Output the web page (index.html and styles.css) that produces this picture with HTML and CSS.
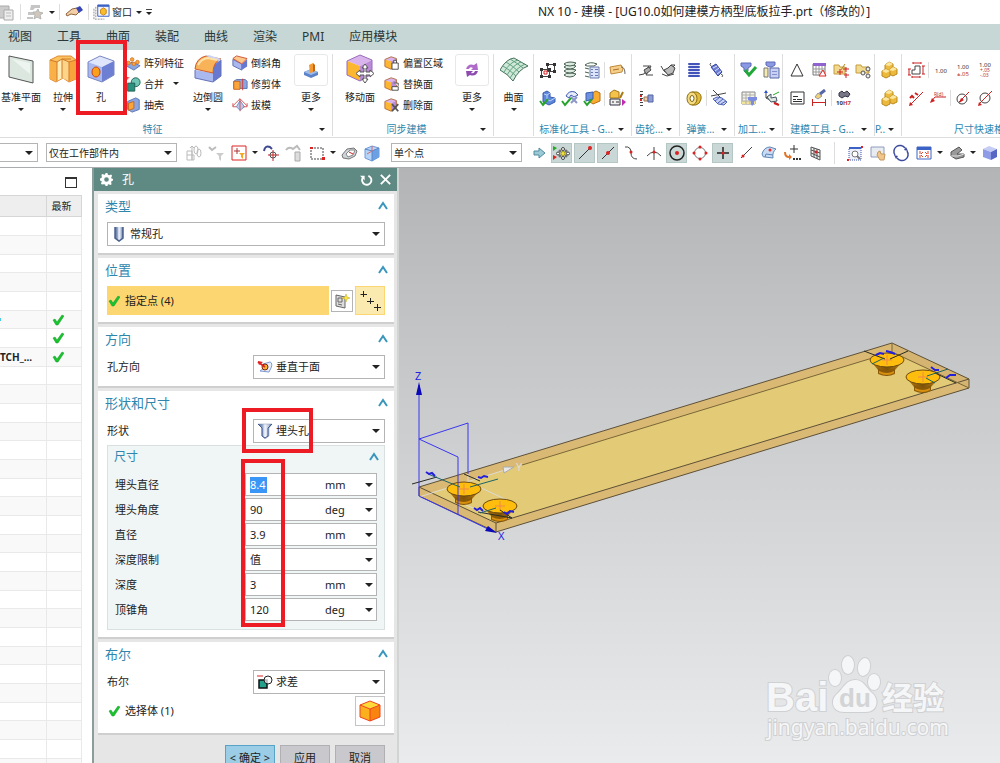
FILE: index.html
```html
<!DOCTYPE html>
<html lang="zh-CN">
<head>
    <meta charset="UTF-8">
    <meta name="viewport" content="width=device-width, initial-scale=1.0">
    <title>NX 10 - 建模</title>
    <link rel="stylesheet" href="styles.css">
</head>
<body>
    <!-- icon sprites -->
    <svg class="sprites" aria-hidden="true">
        <defs>
            <linearGradient id="gBlue" x1="0" y1="0" x2="1" y2="1"><stop offset="0" stop-color="#c3d3f7"/><stop offset="1" stop-color="#5f78cf"/></linearGradient>
            <linearGradient id="gOrange" x1="0" y1="0" x2="1" y2="1"><stop offset="0" stop-color="#ffe08a"/><stop offset="1" stop-color="#ef8f1e"/></linearGradient>
            <linearGradient id="gSteel" x1="0" y1="0" x2="1" y2="0"><stop offset="0" stop-color="#4d6390"/><stop offset=".3" stop-color="#8fa2c6"/><stop offset=".5" stop-color="#f4f7fd"/><stop offset=".75" stop-color="#b9c6de"/><stop offset="1" stop-color="#44597f"/></linearGradient>
            <linearGradient id="gCone" x1="0" y1="0" x2="1" y2="0"><stop offset="0" stop-color="#b97a12"/><stop offset=".5" stop-color="#7d5208"/><stop offset="1" stop-color="#c58517"/></linearGradient>
        </defs>
        <symbol id="i-plane" viewBox="0 0 28 30"><path d="M2 2 26 7V29L2 23Z" fill="#dbe7df" stroke="#555"/><path d="M5 5 23 9V20Z" fill="#eef5f0"/></symbol>
        <symbol id="i-extrude" viewBox="0 0 28 30"><path d="M1 6 9 2H22L27 6V25L20 28 14 24 7 28 1 25Z" fill="#fbc35e" stroke="#e08a35"/><path d="M1 6 8 8V27L1 25Z" fill="#f9b046"/><path d="M20 8 27 6V25L20 27Z" fill="#f7a53a"/><path d="M8 8 13 5V24L8 27Z" fill="#ffedb5"/><path d="M13 5 20 8V27L13 24Z" fill="#fdd488"/><path d="M1 6 8 8V27M8 8 13 5V24M13 5 20 8V27M20 8 27 6M13 5H22" fill="none" stroke="#d07a2c"/></symbol>
        <symbol id="i-hole" viewBox="0 0 28 30"><path d="M1 8 13 2 27 7 15 13Z" fill="#dfe6fb"/><path d="M1 8 15 13V28L1 23Z" fill="#a9b8ee"/><path d="M15 13 27 7V21L15 28Z" fill="#6d7fd2"/><path d="M1 8 13 2 27 7V21L15 28 1 23Z" fill="none" stroke="#7886c4"/><ellipse cx="9" cy="18" rx="4" ry="5" fill="#f9a11b" stroke="#cf3f14"/></symbol>
        <symbol id="i-fillet" viewBox="0 0 28 30"><path d="M1 16 19 19V28L1 24Z" fill="#a9b8ee"/><path d="M19 18Q19 9 27 6V22L19 28Z" fill="#6678d0"/><path d="M1 15Q2 4 12 2L27 5Q19 8 19 19L1 15Z" fill="#f8b257" stroke="#cf5a2c"/><path d="M12 2 15 1 27 5 25 7Z" fill="#c9d5f8"/><path d="M4 11Q7 5 14 4L23 6" fill="none" stroke="#fde2ac" stroke-width="2"/><path d="M1 16V24L19 28 27 22V6" fill="none" stroke="#6472b8"/></symbol>
        <symbol id="i-move" viewBox="0 0 28 30"><path d="M1 7 14 1 26 6 14 12Z" fill="#d9b3ec"/><path d="M1 7 14 12V27L1 21Z" fill="#fdb62f"/><path d="M14 12 26 6V20L14 27Z" fill="#bb8bd8"/><path d="M1 7 14 1 26 6V20L14 27 1 21Z" fill="none" stroke="#9a6bb5"/><path d="M19 10 22 14H20V18H24V16L28 19.500 24 23V21H20V25H22L19 29 16 25H18V21H14V23L10 19.500 14 16V18H18V14H16Z" fill="#fff" stroke="#555"/></symbol>
        <symbol id="i-surface" viewBox="0 0 28 30"><path d="M0 16Q6 5 14 4L28 12Q19 15 13 27Q8 20 0 16Z" fill="#cfe8d9" stroke="#46705a"/><path d="M3 12Q10 16 16 22M6 8Q13 12 19 18M10 5Q17 9 23 14M4 18Q10 8 18 6M7 21Q13 11 21 8M10 24Q16 14 25 10" fill="none" stroke="#5f9f7c"/></symbol>
        <symbol id="i-boss" viewBox="0 0 18 18"><path d="M2 11 9 8 16 11V14L9 17 2 14Z" fill="#5c83c9"/><path d="M2 11 9 8 16 11 9 14Z" fill="#9dbbea"/><path d="M7 4 11 2V11L8 12Z" fill="#f49a33"/><path d="M11 2 13 4V10L11 11Z" fill="#c96510"/></symbol>
        <symbol id="i-cycle" viewBox="0 0 18 18"><path d="M3 8Q5 2 11 4L14 2 15 9 8 9 10 7Q7 5 6 8Z" fill="#b06ac9"/><path d="M15 10Q13 16 7 14L4 16 3 10 10 10 8 12Q11 13 12 10Z" fill="#8e4bb0"/></symbol>
        <symbol id="i-pattern" viewBox="0 0 18 18"><path d="M1 12 8 8 17 12 10 17Z" fill="#8ba6df" stroke="#546fae"/><g fill="#f9a53a" stroke="#d5792b"><circle cx="4" cy="9" r="2"/><circle cx="8" cy="5" r="2"/><circle cx="10" cy="10" r="2"/><circle cx="14" cy="8" r="2"/></g></symbol>
        <symbol id="i-unite" viewBox="0 0 18 18"><circle cx="12" cy="7" r="5" fill="#6fc4b4" stroke="#1b5b50"/><path d="M3 8H11V17H3Z" fill="#2d8f7d" stroke="#1b5b50"/><path d="M1 2H5M3 1V4" stroke="#e33"/></symbol>
        <symbol id="i-shell" viewBox="0 0 18 18"><path d="M3 5 12 1 16 3V14L8 17 3 14Z" fill="#8ba6df" stroke="#546fae"/><path d="M4 7 10 5V13L4 15Z" fill="#f9a53a" stroke="#c8641a"/></symbol>
        <symbol id="i-chamfer" viewBox="0 0 18 18"><path d="M1 5 11 10V17L1 12Z" fill="#a9b8ee" stroke="#5468ae"/><path d="M11 10 17 5V13L11 17Z" fill="#6678d0"/><path d="M1 4 5 1 17 4 11 10Z" fill="#fbc78a" stroke="#cc4b32"/></symbol>
        <symbol id="i-trim" viewBox="0 0 18 18"><path d="M2 6 5 4H15L17 6V14H2Z" fill="#8ba6df" stroke="#546fae"/><path d="M2 6H9V15H2Z" fill="#f9a53a" stroke="#c8641a"/><path d="M12 3V16" stroke="#d33"/></symbol>
        <symbol id="i-draft" viewBox="0 0 18 18"><path d="M9 4 5 11 9 15 14 11Z" fill="#b9c9ee" stroke="#6d86c4"/><path d="M9 2 1 10M9 2 17 10M9 2V16M1 7V11H5M17 7V11H13" fill="none" stroke="#d04a4a"/></symbol>
        <symbol id="i-face" viewBox="0 0 18 18"><path d="M1 5 8 2 14 4 8 7Z" fill="#d9b3ec"/><path d="M1 5 8 7V16L1 13Z" fill="#fdb62f"/><path d="M8 7 14 4V12L8 16Z" fill="#bb8bd8"/><path d="M1 5 8 2 14 4V12L8 16 1 13Z" fill="none" stroke="#b0693c"/></symbol>
        <symbol id="i-offset" viewBox="0 0 18 18"><use href="#i-face"/><path d="M9 9H16V16H9ZM11 9V6H14V9" fill="#fff" stroke="#444"/></symbol>
        <symbol id="i-replace" viewBox="0 0 18 18"><use href="#i-face"/><path d="M9 12H16V16H9ZM11 8H16V11" fill="#fff" stroke="#444"/></symbol>
        <symbol id="i-delete" viewBox="0 0 18 18"><use href="#i-face"/><path d="M9 8 16 16M16 8 9 16" stroke="#555" stroke-width="2"/></symbol>
        <symbol id="i-nodes" viewBox="0 0 18 18"><path d="M8.500 3.500H15.500V10.500H8.500ZM2.500 8.500H10.500V15.500H2.500Z" fill="none" stroke="#444"/><path d="M7 2H10V5H7ZM14 2H17V5H14ZM14 9H17V12H14ZM1 7H4V10H1ZM9 14H12V17H9ZM1 14H4V17H1ZM9 7H12V10H9Z" fill="#333"/><path d="M5 10H8V13H5Z" fill="#fff" stroke="#d22"/></symbol>
        <symbol id="i-layers" viewBox="0 0 18 18"><g fill="#dceae1" stroke="#46604f"><path d="M3 14Q5 16 9 16 13 16 15 13 12 12 9 12 5 12 3 14Z"/><path d="M3 10Q5 12 9 12 13 12 15 9 12 8 9 8 5 8 3 10Z"/><path d="M3 6Q5 8 9 8 13 8 15 5 12 4 9 4 5 4 3 6Z"/><path d="M3 3Q5 5 9 5 13 5 15 2 12 1 9 1 5 1 3 3Z"/></g></symbol>
        <symbol id="i-sheet" viewBox="0 0 18 18"><path d="M2 4Q7 0 14 3L11 5H4ZM2 7 6 8M2 11 6 12M2 15 6 16" fill="none" stroke="#46604f"/><path d="M7 6H16V17H7Z" fill="#dbe4fa" stroke="#6978ad"/><path d="M8 8.500H10M12 8.500H15M8 11.500H10M12 11.500H15M8 14.500H10M12 14.500H15" stroke="#6978ad"/></symbol>
        <symbol id="i-tag" viewBox="0 0 18 18"><path d="M2 6 13 4 15 7 14 11 3 13Z" fill="#f6cf8a" stroke="#c08a3c"/><path d="M5 9 11 8" stroke="#a9702c"/><path d="M13 6Q17 6 17 13" fill="none" stroke="#666"/></symbol>
        <symbol id="i-partcheck" viewBox="0 0 18 18"><path d="M4 4 8 2 11 4V8L16 9V13L10 16 4 13Z" fill="#5d87dc" stroke="#3a5cab"/><path d="M5 5 8 6 11 4M8 6V10L11 12 16 9" fill="none" stroke="#bcd0f5"/><path d="M1 12 4 16 9 10" fill="none" stroke="#27a32b" stroke-width="2"/></symbol>
        <symbol id="i-toolcheck" viewBox="0 0 18 18"><path d="M5 7Q8 1 14 3L17 6 13 8 10 6 8 9Z" fill="#e7ecfb" stroke="#4158b5"/><path d="M10 8 16 14M16 8 10 14" stroke="#8a96c8" stroke-width="2"/><path d="M1 12 4 16 10 9" fill="none" stroke="#27a32b" stroke-width="2"/></symbol>
        <symbol id="i-boxcheck" viewBox="0 0 18 18"><path d="M7 5 13 2 17 4V12L10 15 7 13Z" fill="#f8ad30" stroke="#b56d12"/><path d="M3 4 10 3V10L3 12Z" fill="#6c92e0" stroke="#3a5cab"/><path d="M1 12 4 16 9 10" fill="none" stroke="#27a32b" stroke-width="2"/></symbol>
        <symbol id="i-export" viewBox="0 0 18 18"><path d="M2 4 6 1 11 3V9H2Z" fill="#f5c24b" stroke="#a87816"/><path d="M2 10H12V16H2Z" fill="#eee" stroke="#334"/><path d="M4 13H6M8 13H11" stroke="#333"/><path d="M14 10 18 13 14 17Z" fill="#c02bb0"/><path d="M12 9 15 3" stroke="#a87816" stroke-width="2"/></symbol>
        <symbol id="i-gear2" viewBox="0 0 18 18"><path d="M2 14 7 13 12 5M6 5H14M12 9 9 14H16M14 5 12 9" fill="none" stroke="#444"/><path d="M7 9 12 6 14 9 9 13Z" fill="#aaa" stroke="#444"/></symbol>
        <symbol id="i-gear3" viewBox="0 0 18 18"><path d="M2 5 5 10 8 12 16 4H12M3 13 8 15 15 13" fill="none" stroke="#444"/><path d="M5 9 9 7 12 4 16 7 14 12 9 14Z" fill="#bbb" stroke="#444"/></symbol>
        <symbol id="i-list" viewBox="0 0 18 18"><path d="M3 2.500H6M3 5.500H6M3 9.500H6M3 13.500H6M3 16.500H6" stroke="#444"/><path d="M4 6V8M4 10V12" stroke="#d22" stroke-width="2"/><path d="M7 8H11V12H7Z" fill="#f0cda9" stroke="#9c7350"/><path d="M11 6H16V13H11Z" fill="#8a9bd6" stroke="#56659e"/></symbol>
        <symbol id="i-spring" viewBox="0 0 18 18"><path d="M4 2H14V16H4Z" fill="#dfe4fb"/><path d="M4 3H14M4 6H14M4 9H14M4 12H14M4 15H14" stroke="#4254b8" stroke-width="2" stroke-linecap="round"/></symbol>
        <symbol id="i-spring2" viewBox="0 0 18 18"><path d="M4 2Q2 3 4 5M14 13Q17 14 15 16" fill="none" stroke="#555"/><path d="M4 6 9 3 15 11 11 15Z" fill="#6c7cd2" stroke="#3343a0"/><path d="M6 7 10 5M8 10 12 7M10 13 14 10" stroke="#dde2fb"/></symbol>
        <symbol id="i-roll" viewBox="0 0 18 18"><path d="M7 3H12Q17 5 16 10 15 15 11 16H7Z" fill="#e3bb3d" stroke="#8d6e11"/><ellipse cx="7" cy="9.500" rx="5" ry="6.500" fill="#f3dc84" stroke="#8d6e11"/><ellipse cx="7" cy="9.500" rx="2" ry="3" fill="#fff" stroke="#7c5e08"/></symbol>
        <symbol id="i-cutspring" viewBox="0 0 18 18"><path d="M3 1 14 12M1 7 16 4" stroke="#444"/><path d="M3 10 7 8 12 9 17 13 14 16 8 15Z" fill="#c8d2f6" stroke="#4d62b5"/><path d="M5 12 10 8M8 14 13 10M11 15 16 12" stroke="#4d62b5"/></symbol>
        <symbol id="i-okay" viewBox="0 0 18 18"><path d="M1 2H11V5L8 7V10L6 12 4 10V7L1 5Z" fill="#8b98e2" stroke="#5c69b5"/><path d="M5 9 9 14 16 6" fill="none" stroke="#21a838" stroke-width="3"/></symbol>
        <symbol id="i-hier" viewBox="0 0 18 18"><path d="M4 1H13V4L10 6H7L4 4Z" fill="#8b98e2" stroke="#5c69b5"/><path d="M2 7H6V16H2Z" fill="#f7eab0" stroke="#777"/><path d="M8 7H17V17H8Z" fill="#c8d0f5" stroke="#5766a5"/><path d="M10 10.500H15M10 13.500H15" stroke="#8490cc"/></symbol>
        <symbol id="i-grid" viewBox="0 0 18 18"><path d="M2 3H15V15H2Z" fill="#f2f2ec" stroke="#888"/><path d="M2 12H15V15H2Z" fill="#f2e39a"/><path d="M2 6H15M2 9H15M2 12H15M6 3V15M10 3V15" stroke="#b0b0a8"/><path d="M8 8H17V11L14 12V15L12 17 11 15V12L8 11Z" fill="#7b8be0"/></symbol>
        <symbol id="i-axes" viewBox="0 0 18 18"><path d="M4 2V9L16 15M4 9 8 6" fill="none" stroke="#444"/><path d="M2 4 4 1 6 4Z" fill="#2d54d0"/><path d="M5 8 9 5V9L14 8 15 12 9 13Z" fill="#dfe9e2" stroke="#456"/><path d="M11 6 17 3" stroke="#2a2"/><path d="M12 14 17 16" stroke="#c22" stroke-width="2"/></symbol>
        <symbol id="i-tri" viewBox="0 0 18 18"><path d="M9 3 15 15H3Z" fill="#fff" stroke="#333"/></symbol>
        <symbol id="i-table" viewBox="0 0 18 18"><path d="M3 3H15V14H3Z" fill="#fff" stroke="#777"/><path d="M3 2H16V5H3Z" fill="#8f62cf"/><path d="M3 8H15M3 11H15M6 5V14M9 5V14M12 5V14" stroke="#999"/><path d="M13 9 16 15H9Z" fill="#fff" stroke="#d22"/></symbol>
        <symbol id="i-foldplus" viewBox="0 0 18 18"><path d="M2 4H7L8 6H13V13H2Z" fill="#f2d990" stroke="#c49c3c"/><path d="M9 9 13 3" stroke="#ad8422"/><path d="M8 8V14M5 11H11M14 6V11M11 8H17M14 12V17M12 14H17" stroke="#c22"/></symbol>
        <symbol id="i-foldgear" viewBox="0 0 18 18"><path d="M2 4H7L8 6H15V12H2Z" fill="#f2d990" stroke="#c49c3c"/><g fill="#eee" stroke="#555"><circle cx="9" cy="12" r="2"/><circle cx="14" cy="8" r="2"/><circle cx="14" cy="15" r="2"/></g></symbol>
        <symbol id="i-note" viewBox="0 0 18 18"><path d="M3 3H16V15H3Z" fill="#fff" stroke="#333"/><path d="M5 7.500H10M5 10.500H8M9 10.500H14M5 12.500H14" stroke="#333"/></symbol>
        <symbol id="i-brush" viewBox="0 0 18 18"><path d="M2.500 10V17M15.500 10V17M3 13.500H15" stroke="#c22"/><path d="M5 8 8 4 12 7 8 10Z" fill="#f2d176" stroke="#999"/><path d="M10 5 15 1" stroke="#5667a8" stroke-width="3"/></symbol>
        <symbol id="i-cubes" viewBox="0 0 18 18"><g fill="#edb93c" stroke="#b8891f"><path d="M5 4 9 1 13 3V8L9 10 5 8Z"/><path d="M9 9 13 6 17 8V13L13 15 9 13Z"/><path d="M2 10 6 8 10 10V15L6 17 2 15Z"/></g><path d="M5 4 9 1 13 3 9 5ZM9 9 13 6 17 8 13 10ZM2 10 6 8 10 10 6 12Z" fill="#fbe7a0"/></symbol>
        <symbol id="i-dimbox" viewBox="0 0 18 18"><path d="M8 5V9H5V13H13V5Z" fill="#fff" stroke="#444"/><path d="M6 2H14M6 1V3M14 1V3M2 8V14M1 8H4M1 14H4M16 5V13M15 5H18M15 13H18M5 16H13M5 15V17M13 15V17" stroke="#c22"/></symbol>
        <symbol id="i-slant" viewBox="0 0 18 18"><path d="M3 16 16 3" stroke="#c22"/><path d="M2 17 3 13 6 16Z" fill="#c22"/><path d="M3 9 5 7 7 9M8 4 11 6" fill="none" stroke="#c22" stroke-width="2"/></symbol>
        <symbol id="i-dia" viewBox="0 0 18 18"><circle cx="8" cy="10" r="5" fill="none" stroke="#444"/><path d="M5 13 15 3" stroke="#c22"/><path d="M5 14 7 9 10 11Z" fill="#c22"/></symbol>
        <symbol id="i-dia2" viewBox="0 0 18 18"><circle cx="9" cy="9" r="5" fill="none" stroke="#444"/><path d="M3 15 16 2" stroke="#c22"/><path d="M2 17 3 13 6 16Z" fill="#c22"/></symbol>

        <symbol id="i-paste" viewBox="0 0 18 18"><path d="M2 3H12V15H2Z" fill="#ccc" stroke="#aaa"/><path d="M7 7H16V17H7Z" fill="#eee" stroke="#aaa"/><path d="M9 10H14M9 13H14" stroke="#bbb"/></symbol>
        <symbol id="i-repeat" viewBox="0 0 18 18"><path d="M5 2H14V5H9L7 7H4ZM2 9H8V12H2ZM1 14H7V16H1Z" fill="#c5c5c5"/><path d="M12 6 13 9 17 10 14 12 15 16 11 14 8 16 9 12 7 9 10 9Z" fill="#cfc8bb" stroke="#b5b5b5"/></symbol>
        <symbol id="i-hand" viewBox="0 0 18 18"><path d="M1 11 7 6 12 5 15 8 11 12 6 11 2 13Z" fill="#f3cfa8" stroke="#8f633c"/><path d="M11 5 15 3 18 7 14 10Z" fill="#3647b5"/></symbol>
        <symbol id="i-win" viewBox="0 0 18 18"><path d="M1 5V16H12M3 3V14" fill="none" stroke="#888" stroke-dasharray="2 1"/><path d="M5 1H17V13H5Z" fill="#f0f4ff" stroke="#3b62c4"/><path d="M5 1H17V3H5Z" fill="#3b62c4"/><path d="M8 6 11 4 14 6V10L11 12 8 10Z" fill="#f9bd2b" stroke="#c88411"/></symbol>

        <symbol id="i-asm" viewBox="0 0 18 18"><path d="M3 7H8V16H3ZM8 2V16M6 4 8 2 10 4M3 11H10V16H8" fill="none" stroke="#bbb"/><ellipse cx="12" cy="6" rx="2" ry="4" fill="none" stroke="#bbb"/><ellipse cx="15" cy="9" rx="2" ry="4" fill="none" stroke="#bbb"/></symbol>
        <symbol id="i-filter" viewBox="0 0 18 18"><path d="M2 3 5 6 9 3" fill="none" stroke="#bbb" stroke-width="2"/><path d="M9 9H17L14 12V17L12 15V12Z" fill="#ccc"/></symbol>
        <symbol id="i-filter2" viewBox="0 0 18 18"><path d="M2 2H16V16H2Z" fill="#fff" stroke="#d22"/><path d="M7 4V10M4 7H10" stroke="#a33"/><path d="M9 9H15L13 11V15L11 13V11Z" fill="#f3a61f"/></symbol>
        <symbol id="i-point" viewBox="0 0 18 18"><path d="M2 7Q3 1 8 3L10 5" fill="none" stroke="#3d478f" stroke-width="2"/><path d="M11 6V17M6 11H17" stroke="#c22"/><circle cx="11" cy="11" r="3" fill="none" stroke="#555"/></symbol>
        <symbol id="i-lasso" viewBox="0 0 18 18"><path d="M1 6Q4 2 8 5L12 2 15 6" fill="none" stroke="#bbb" stroke-width="2"/><path d="M10 8H15V17H10Z" fill="#ddd" stroke="#aaa"/></symbol>
        <symbol id="i-rect" viewBox="0 0 18 18"><path d="M3 4H15V15H3Z" fill="none" stroke="#444" stroke-dasharray="2 1"/><path d="M2 3H5V5H2ZM14 13H17V16H14Z" fill="#d22"/></symbol>
        <symbol id="i-shade" viewBox="0 0 18 18"><path d="M2 11 7 5 14 4 17 7 15 12 9 15 3 14Z" fill="#cfd3da" stroke="#777"/><path d="M6 10 10 6 15 6 13 11 8 13Z" fill="#fff" stroke="#888"/><path d="M9 8 13 10" stroke="#c22"/></symbol>
        <symbol id="i-cube" viewBox="0 0 18 18"><path d="M2 5 9 2 16 4V13L9 17 2 14Z" fill="#b5d4f8" stroke="#6f9ad8"/><path d="M9 7 16 4V13L9 17Z" fill="#6ba0e4"/><path d="M2 5 9 7 16 4M9 7V17" fill="none" stroke="#5c86c6"/><path d="M4 10 9 7V2" fill="none" stroke="#d66"/></symbol>
        <symbol id="i-arrow" viewBox="0 0 18 18"><path d="M4 7H9V4L15 9 9 14V11H4Z" fill="#9cc9d6" stroke="#4f8b9d"/></symbol>
        <symbol id="i-snap" viewBox="0 0 18 18"><path d="M0 2 4 4 0 7Z" fill="#2a2"/><path d="M0 11 4 13 0 16Z" fill="#d22"/><g fill="#fff" stroke="#444"><circle cx="10" cy="5" r="1.500"/><circle cx="10" cy="14" r="1.500"/><circle cx="5" cy="9.500" r="1.500"/><circle cx="15" cy="9.500" r="1.500"/><circle cx="7" cy="7" r="1"/><circle cx="13" cy="7" r="1"/><circle cx="7" cy="12" r="1"/><circle cx="13" cy="12" r="1"/></g><circle cx="10" cy="9.500" r="2" fill="#f5e04a" stroke="#a90"/></symbol>
        <symbol id="i-end" viewBox="0 0 18 18"><path d="M3 15 14 4" stroke="#333"/><circle cx="14" cy="4" r="2" fill="#d22"/></symbol>
        <symbol id="i-mid" viewBox="0 0 18 18"><path d="M3 15 15 3" stroke="#333"/><circle cx="9" cy="9" r="2" fill="#d22"/></symbol>
        <symbol id="i-curve" viewBox="0 0 18 18"><path d="M3 3Q9 2 9 9Q9 15 15 15" fill="none" stroke="#444"/><circle cx="9" cy="8" r="1.500" fill="#d22"/></symbol>
        <symbol id="i-inter" viewBox="0 0 18 18"><path d="M9 3V16M2 12Q9 4 16 12" fill="none" stroke="#444"/><circle cx="9" cy="8" r="1.500" fill="#d22"/></symbol>
        <symbol id="i-center" viewBox="0 0 18 18"><circle cx="9" cy="9" r="7" fill="none" stroke="#222" stroke-width="1.500"/><circle cx="9" cy="9" r="2" fill="#d22"/></symbol>
        <symbol id="i-quad" viewBox="0 0 18 18"><circle cx="9" cy="9" r="5.500" fill="none" stroke="#777"/><g fill="#d22"><circle cx="9" cy="3" r="1.500"/><circle cx="9" cy="15" r="1.500"/><circle cx="3" cy="9" r="1.500"/><circle cx="15" cy="9" r="1.500"/></g></symbol>
        <symbol id="i-exist" viewBox="0 0 18 18"><path d="M9 3V15M3 9H15" stroke="#222" stroke-width="1.500"/><circle cx="9" cy="9" r="1.500" fill="#d22"/></symbol>
        <symbol id="i-tan" viewBox="0 0 18 18"><path d="M4 14 15 3" stroke="#444"/><circle cx="6" cy="12" r="1.500" fill="#d22"/></symbol>
        <symbol id="i-onface" viewBox="0 0 18 18"><path d="M2 10Q4 3 10 3L16 5Q12 8 13 14L5 13Q3 14 2 10Z" fill="#c9dbf3" stroke="#5f86b8"/><path d="M5 13 6 10 13 11" fill="none" stroke="#5f86b8"/><circle cx="10" cy="6" r="1.500" fill="#d33"/></symbol>
        <symbol id="i-more" viewBox="0 0 18 18"><path d="M11 1V9M7 5H15" stroke="#333"/><path d="M2 8Q2 13 6 13" fill="none" stroke="#e0762c" stroke-width="2"/><path d="M6 10 9 13 6 16Z" fill="#e0762c"/><path d="M10 15H12M13 15H15M16 15H18" stroke="#333" stroke-width="2"/></symbol>
        <symbol id="i-mesh" viewBox="0 0 18 18"><path d="M5 3 14 6V16L5 12Z" fill="#eee" stroke="#555"/><path d="M8 4V13M11 5V15M5 6 14 9M5 9 14 13" stroke="#555"/><circle cx="10" cy="8" r="1.500" fill="#d22"/></symbol>
        <symbol id="i-fit" viewBox="0 0 18 18"><path d="M3 4H15V16H3Z" fill="#eef1fb" stroke="#3b52a8" stroke-dasharray="1 1"/><path d="M3 3H15V5H3Z" fill="#3b62c4"/><circle cx="9" cy="10" r="3" fill="#fff" stroke="#777"/><path d="M11 12 14 15" stroke="#777" stroke-width="2"/><path d="M15 2H17V4H15ZM1 15H3V17H1Z" fill="#d22"/></symbol>
        <symbol id="i-pan" viewBox="0 0 18 18"><path d="M2 3H15V13H2Z" fill="#e8ebef" stroke="#8f9cc0"/><path d="M9 8 11 7 12 10 16 10 15 16H11L8 11Z" fill="#f0c68c" stroke="#c4985a"/></symbol>
        <symbol id="i-rotate" viewBox="0 0 18 18"><path d="M3 11A6 6 0 0 1 13 4M15 7A6 6 0 0 1 5 14" fill="none" stroke="#3c4a9c" stroke-width="1.500"/><path d="M12 6 16 7 14 3ZM6 12 2 11 4 15Z" fill="#3c4a9c"/></symbol>
        <symbol id="i-layout" viewBox="0 0 18 18"><path d="M2 3H16V15H2Z" fill="#fff" stroke="#3b62c4"/><path d="M2 3H16V6H2Z" fill="#3b62c4"/><path d="M5 7V10M5 11V14M8 8 6 10M8 13 6 11M13 7V10M13 11V14M10 8 12 10M10 13 12 11" stroke="#e0432a"/></symbol>
        <symbol id="i-style" viewBox="0 0 18 18"><path d="M3 8 11 3 14 6 9 10 16 10V13L8 15 3 12Z" fill="#999" stroke="#555"/><path d="M3 12 10 12 16 10" fill="none" stroke="#ddd"/></symbol>
        <symbol id="i-bluebox" viewBox="0 0 18 18"><path d="M2 5 8 2 16 5 10 8Z" fill="#c6cdf5"/><path d="M2 5 10 8V16L2 13Z" fill="#8e9be6"/><path d="M10 8 16 5V13L10 16Z" fill="#5866c4"/></symbol>

        <symbol id="i-check" viewBox="0 0 12 12"><path d="M1 6 3 5 5 8 10 1 12 2 6 11H4Z" fill="#19c32d" stroke="#14982a" stroke-width=".5"/></symbol>
        <symbol id="i-gear" viewBox="0 0 14 14"><path d="M6 0H8L8.500 2 10 2.500 12 1.500 13 3 12 5 12.500 6 14 6.500V8L12.500 8.500 12 10 12.500 12 11 13 9.500 12 8.500 12.500 8 14H6L5.500 12.500 4 12 2 12.500 1 11 2 9.500 1.500 8.500 0 8V6L1.500 5.500 2 4 1.500 2 3 1 4.500 2 5.500 1.500ZM7 4.500A2.500 2.500 0 1 0 7 9.500A2.500 2.500 0 1 0 7 4.500" fill="#fff" fill-rule="evenodd"/></symbol>
        <symbol id="i-reset" viewBox="0 0 14 14"><path d="M9 3A5 5 0 1 1 3 5" fill="none" stroke="#fff" stroke-width="2"/><path d="M0 3H5V8Z" fill="#fff"/></symbol>
        <symbol id="i-close" viewBox="0 0 14 14"><path d="M2 2 12 12M12 2 2 12" stroke="#fff" stroke-width="2"/></symbol>
        <symbol id="i-up" viewBox="0 0 12 12"><path d="M2 9 6 3 10 9" fill="none" stroke="#3a96bd" stroke-width="2"/></symbol>
        <symbol id="i-drill" viewBox="0 0 16 16"><path d="M4 1H12V12L8 16 4 12Z" fill="url(#gSteel)"/><path d="M4 1V12L8 15 12 12V1" fill="none" stroke="#4d6390" stroke-width="1.500"/></symbol>
        <symbol id="i-csink" viewBox="0 0 16 16"><path d="M1 1H15L12 5V13L8 16 5 13V5Z" fill="url(#gSteel)" stroke="#8494b5" stroke-width=".5"/><path d="M1 1 5 5V13L8 15 11 13V5L15 1" fill="none" stroke="#40598c"/></symbol>
        <symbol id="i-normal" viewBox="0 0 16 16"><path d="M6 5 13 3Q16 4 14 9L12 13 3 12Q7 10 6 5Z" fill="#e6edfb" stroke="#7f9ad0"/><circle cx="8" cy="8" r="3" fill="#f2b830" stroke="#7a2418"/><path d="M1 3 8 8" stroke="#d22" stroke-width="2"/><path d="M1 2 6 3 2 6Z" fill="#d22"/></symbol>
        <symbol id="i-subtract" viewBox="0 0 16 16"><path d="M0 2H6" stroke="#d22"/><path d="M2 6H10V14H2Z" fill="#24a18c" stroke="#111" stroke-width="1.500"/><circle cx="11" cy="6" r="4" fill="#fff" fill-opacity=".7" stroke="#222"/></symbol>
        <symbol id="i-sketch" viewBox="0 0 16 16"><path d="M2 2 11 4V15L2 13Z" fill="#ddd" stroke="#666"/><path d="M4 5H8V9H4ZM4 11 8 12" fill="none" stroke="#666"/><path d="M12 1 13 4 16 5 13 6 12 9 11 6 8 5 11 4Z" fill="#ffe845" stroke="#b9a31b" stroke-width=".5"/></symbol>
        <symbol id="i-pluses" viewBox="0 0 22 22"><path d="M4.500 1V7M1.500 4.500H8M11.500 8V14M8 11.500H15M18.500 14V21M15 17.500H22" stroke="#222"/></symbol>
        <symbol id="i-body" viewBox="0 0 22 22"><path d="M1 5 11 1 21 5 11 9Z" fill="#ffd83a"/><path d="M1 5 11 9V21L1 17Z" fill="#fdb01e"/><path d="M11 9 21 5V17L11 21Z" fill="#f98410"/><path d="M1 5 11 1 21 5V17L11 21 1 17ZM1 5 11 9 21 5M11 9V21" fill="none" stroke="#f0431c"/></symbol>
    </svg>

    <header class="titlebar">
        <div class="quick">
            <button class="tool" aria-label="粘贴"><svg><use href="#i-paste"/></svg></button>
            <i class="sep"></i>
            <button class="tool" aria-label="重复命令"><svg><use href="#i-repeat"/></svg></button>
            <i class="caret"></i>
            <i class="sep"></i>
            <button class="tool" aria-label="触控"><svg><use href="#i-hand"/></svg></button>
            <i class="sep"></i>
            <button class="window-btn"><svg><use href="#i-win"/></svg>窗口<i class="caret"></i></button>
            <span class="caret-bar"><i class="caret"></i></span>
        </div>
        <div class="title">NX 10 - 建模 - [UG10.0如何建模方柄型底板拉手.prt（修改的）]</div>
    </header>

    <nav class="tabs">
        <a href="#">视图</a><a href="#">工具</a><a href="#">曲面</a><a href="#">装配</a><a href="#">曲线</a><a href="#">渲染</a><a href="#">PMI</a><a href="#">应用模块</a>
    </nav>

    <section class="ribbon">
        <div class="group group-feature">
            <div class="group-body">
                <button class="big"><svg><use href="#i-plane"/></svg>基准平面<i class="caret"></i></button>
                <button class="big"><svg><use href="#i-extrude"/></svg>拉伸<i class="caret"></i></button>
                <button class="big big-narrow marked"><svg><use href="#i-hole"/></svg>孔<span class="mark mark-hole"></span></button>
                <div class="stack stack-first">
                    <button><svg><use href="#i-pattern"/></svg>阵列特征</button>
                    <button><svg><use href="#i-unite"/></svg>合并<i class="caret"></i></button>
                    <button><svg><use href="#i-shell"/></svg>抽壳</button>
                </div>
                <button class="big"><svg><use href="#i-fillet"/></svg>边倒圆<i class="caret"></i></button>
                <div class="stack">
                    <button><svg><use href="#i-chamfer"/></svg>倒斜角</button>
                    <button><svg><use href="#i-trim"/></svg>修剪体</button>
                    <button><svg><use href="#i-draft"/></svg>拔模</button>
                </div>
                <button class="big big-more"><span class="frame"><svg><use href="#i-boss"/></svg></span>更多<i class="caret"></i></button>
            </div>
            <div class="group-label"><span>特征</span><i class="caret"></i></div>
        </div>
        <div class="group group-sync">
            <div class="group-body">
                <button class="big"><svg><use href="#i-move"/></svg>移动面</button>
                <div class="stack">
                    <button><svg><use href="#i-offset"/></svg>偏置区域</button>
                    <button><svg><use href="#i-replace"/></svg>替换面</button>
                    <button><svg><use href="#i-delete"/></svg>删除面</button>
                </div>
                <button class="big big-more"><span class="frame"><svg><use href="#i-cycle"/></svg></span>更多<i class="caret"></i></button>
            </div>
            <div class="group-label"><span>同步建模</span><i class="caret"></i></div>
        </div>
        <div class="group group-surface">
            <div class="group-body">
                <button class="big"><svg><use href="#i-surface"/></svg>曲面<i class="caret"></i></button>
            </div>
        </div>
        <div class="group group-std">
            <div class="rows">
                <div class="row">
                    <button class="tool" aria-label="关联"><svg><use href="#i-nodes"/></svg></button>
                    <button class="tool" aria-label="图层"><svg><use href="#i-layers"/></svg></button>
                    <button class="tool" aria-label="属性"><svg><use href="#i-sheet"/></svg></button>
                    <i class="sep"></i>
                    <button class="tool" aria-label="标签"><svg><use href="#i-tag"/></svg></button>
                </div>
                <div class="row">
                    <button class="tool" aria-label="检查部件"><svg><use href="#i-partcheck"/></svg></button>
                    <button class="tool" aria-label="检查工具"><svg><use href="#i-toolcheck"/></svg></button>
                    <button class="tool" aria-label="检查装配"><svg><use href="#i-boxcheck"/></svg></button>
                    <i class="sep"></i>
                    <button class="tool" aria-label="导出"><svg><use href="#i-export"/></svg></button>
                </div>
            </div>
            <div class="group-label"><span>标准化工具 - G...</span><i class="caret"></i></div>
        </div>
        <div class="group group-gear">
            <div class="rows">
                <div class="row">
                    <button class="tool" aria-label="圆柱齿轮"><svg><use href="#i-gear2"/></svg></button>
                    <button class="tool" aria-label="锥齿轮"><svg><use href="#i-gear3"/></svg></button>
                </div>
                <div class="row">
                    <button class="tool" aria-label="齿轮列表"><svg><use href="#i-list"/></svg></button>
                </div>
            </div>
            <div class="group-label"><span>齿轮...</span><i class="caret"></i></div>
        </div>
        <div class="group group-spring">
            <div class="rows">
                <div class="row">
                    <button class="tool" aria-label="压缩弹簧"><svg><use href="#i-spring"/></svg></button>
                    <button class="tool" aria-label="拉伸弹簧"><svg><use href="#i-spring2"/></svg></button>
                </div>
                <div class="row">
                    <button class="tool" aria-label="碟簧"><svg><use href="#i-roll"/></svg></button>
                    <i class="sep"></i>
                    <button class="tool" aria-label="删除弹簧"><svg><use href="#i-cutspring"/></svg></button>
                </div>
            </div>
            <div class="group-label"><span>弹簧...</span><i class="caret"></i></div>
        </div>
        <div class="group group-mach">
            <div class="rows">
                <div class="row">
                    <button class="tool" aria-label="加工准备"><svg><use href="#i-okay"/></svg></button>
                    <button class="tool" aria-label="工件"><svg><use href="#i-hier"/></svg></button>
                </div>
                <div class="row">
                    <button class="tool" aria-label="表格"><svg><use href="#i-grid"/></svg></button>
                    <button class="tool" aria-label="坐标"><svg><use href="#i-axes"/></svg></button>
                </div>
            </div>
            <div class="group-label"><span>加工...</span><i class="caret"></i></div>
        </div>
        <div class="group group-model">
            <div class="rows">
                <div class="row">
                    <button class="tool" aria-label="三角"><svg><use href="#i-tri"/></svg></button>
                    <button class="tool" aria-label="表"><svg><use href="#i-table"/></svg></button>
                    <button class="tool" aria-label="添加重用"><svg><use href="#i-foldplus"/></svg></button>
                    <button class="tool" aria-label="重用设置"><svg><use href="#i-foldgear"/></svg></button>
                </div>
                <div class="row">
                    <button class="tool" aria-label="注释"><svg><use href="#i-note"/></svg></button>
                    <button class="tool" aria-label="尺寸刷"><svg><use href="#i-brush"/></svg></button>
                    <i class="sep"></i>
                    <button class="tool" aria-label="公差查询"><svg viewBox="0 0 18 18"><path d="M4 4 7 2 9 4 12 2 15 5 13 8 10 7 7 9 4 7Z" fill="#778" stroke="#334"/><text x="1" y="16" class="tiny tiny-bold">10<tspan class="red">H7</tspan></text></svg></button>
                </div>
            </div>
            <div class="group-label"><span>建模工具 - G...</span><i class="caret"></i></div>
        </div>
        <div class="group group-p">
            <div class="rows">
                <div class="row"><button class="tool" aria-label="部件"><svg><use href="#i-cubes"/></svg></button></div>
                <div class="row"><button class="tool" aria-label="部件族"><svg><use href="#i-cubes"/></svg></button></div>
            </div>
            <div class="group-label"><span>P..</span><i class="caret"></i></div>
        </div>
        <div class="group group-dim">
            <div class="rows">
                <div class="row">
                    <button class="tool" aria-label="尺寸"><svg><use href="#i-dimbox"/></svg></button>
                    <i class="sep"></i>
                    <button class="tool" aria-label="无公差"><svg viewBox="0 0 18 18"><text x="3" y="12" class="tiny">1.00</text></svg></button>
                    <button class="tool" aria-label="等双向公差"><svg viewBox="0 0 18 18"><text x="3" y="8" class="tiny">1.00</text><text x="3" y="15" class="tiny red">±.05</text></svg></button>
                    <button class="tool" aria-label="双向公差"><svg viewBox="0 0 18 18"><text x="3" y="6" class="tiny">1.00</text><text x="4" y="11" class="tinier red">+.05</text><text x="4" y="16" class="tinier red">-.03</text></svg></button>
                </div>
                <div class="row">
                    <button class="tool" aria-label="对齐"><svg><use href="#i-slant"/></svg></button>
                    <button class="tool" aria-label="引出"><svg viewBox="0 0 18 18"><path d="M2 13 6 8H17" fill="none" stroke="#c22"/><path d="M1 14 3 9 6 12Z" fill="#c22"/><text x="5" y="7" class="tinier red">R(d)</text></svg></button>
                    <i class="sep"></i>
                    <button class="tool" aria-label="半径"><svg><use href="#i-dia"/></svg></button>
                    <button class="tool" aria-label="直径"><svg><use href="#i-dia2"/></svg></button>
                </div>
            </div>
            <div class="group-label"><span>尺寸快速格</span></div>
        </div>
    </section>

    <section class="selbar">
        <div class="combo combo-sm combo-first"><select aria-label="类型过滤器"><option></option></select></div>
        <div class="combo combo-sm combo-scope"><select aria-label="选择范围"><option>仅在工作部件内</option></select></div>
        <button class="tool" aria-label="装配选择"><svg><use href="#i-asm"/></svg></button>
        <button class="tool" aria-label="重置过滤器"><svg><use href="#i-filter"/></svg></button>
        <button class="tool" aria-label="过滤器"><svg><use href="#i-filter2"/></svg></button>
        <i class="caret"></i>
        <button class="tool" aria-label="捕捉"><svg><use href="#i-point"/></svg></button>
        <button class="tool" aria-label="套索"><svg><use href="#i-lasso"/></svg></button>
        <button class="tool" aria-label="矩形选择"><svg><use href="#i-rect"/></svg></button>
        <i class="caret"></i>
        <button class="tool" aria-label="高亮"><svg><use href="#i-shade"/></svg></button>
        <button class="tool" aria-label="着色"><svg><use href="#i-cube"/></svg></button>
        <div class="combo combo-sm combo-point"><select aria-label="点规则"><option>单个点</option></select></div>
        <div class="snaps">
            <button class="tool" aria-label="下一个"><svg><use href="#i-arrow"/></svg></button>
            <button class="tool on" aria-label="启用捕捉点"><svg><use href="#i-snap"/></svg></button>
            <button class="tool on" aria-label="端点"><svg><use href="#i-end"/></svg></button>
            <button class="tool on" aria-label="中点"><svg><use href="#i-mid"/></svg></button>
            <button class="tool" aria-label="控制点"><svg><use href="#i-curve"/></svg></button>
            <button class="tool" aria-label="交点"><svg><use href="#i-inter"/></svg></button>
            <button class="tool on" aria-label="圆弧中心"><svg><use href="#i-center"/></svg></button>
            <button class="tool" aria-label="象限点"><svg><use href="#i-quad"/></svg></button>
            <button class="tool on" aria-label="现有点"><svg><use href="#i-exist"/></svg></button>
            <button class="tool" aria-label="相切点"><svg><use href="#i-tan"/></svg></button>
            <button class="tool" aria-label="面上的点"><svg><use href="#i-onface"/></svg></button>
            <button class="tool" aria-label="点构造器"><svg><use href="#i-more"/></svg></button>
            <button class="tool" aria-label="网格点"><svg><use href="#i-mesh"/></svg></button>
            <i class="sep"></i>
            <button class="tool" aria-label="适合窗口"><svg><use href="#i-fit"/></svg></button>
            <button class="tool" aria-label="平移"><svg><use href="#i-pan"/></svg></button>
            <button class="tool" aria-label="旋转"><svg><use href="#i-rotate"/></svg></button>
            <button class="tool" aria-label="布局"><svg><use href="#i-layout"/></svg></button>
            <i class="caret"></i>
            <button class="tool" aria-label="渲染样式"><svg><use href="#i-style"/></svg></button>
            <i class="caret"></i>
            <button class="tool" aria-label="视图方向"><svg><use href="#i-bluebox"/></svg></button>
        </div>
    </section>

    <main class="workspace">
        <aside class="navigator">
            <div class="nav-top"><button class="restore" aria-label="还原"></button></div>
            <table>
                <thead><tr><th></th><th>最新</th></tr></thead>
                <tbody>
                    <tr><td></td><td></td></tr>
                    <tr><td></td><td></td></tr>
                    <tr><td></td><td></td></tr>
                    <tr><td></td><td></td></tr>
                    <tr><td></td><td></td></tr>
                    <tr><td><i class="dot"></i></td><td><svg><use href="#i-check"/></svg></td></tr>
                    <tr><td></td><td><svg><use href="#i-check"/></svg></td></tr>
                    <tr><td>TCH_...</td><td><svg><use href="#i-check"/></svg></td></tr>
                    <tr><td></td><td></td></tr>
                    <tr><td></td><td></td></tr>
                    <tr><td></td><td></td></tr>
                    <tr><td></td><td></td></tr>
                    <tr><td></td><td></td></tr>
                    <tr><td></td><td></td></tr>
                    <tr><td></td><td></td></tr>
                    <tr><td></td><td></td></tr>
                    <tr><td></td><td></td></tr>
                    <tr><td></td><td></td></tr>
                    <tr><td></td><td></td></tr>
                    <tr><td></td><td></td></tr>
                    <tr><td></td><td></td></tr>
                    <tr><td></td><td></td></tr>
                    <tr><td></td><td></td></tr>
                    <tr><td></td><td></td></tr>
                    <tr><td></td><td></td></tr>
                    <tr><td></td><td></td></tr>
                    <tr><td></td><td></td></tr>
                    <tr><td></td><td></td></tr>
                    <tr><td></td><td></td></tr>
                    <tr><td></td><td></td></tr>
                </tbody>
            </table>
        </aside>

        <form class="dialog">
            <div class="dialog-head">
                <svg><use href="#i-gear"/></svg>
                <h1>孔</h1>
                <button type="button" aria-label="重置"><svg><use href="#i-reset"/></svg></button>
                <button type="button" aria-label="关闭"><svg><use href="#i-close"/></svg></button>
            </div>

            <section class="card">
                <h2>类型<svg><use href="#i-up"/></svg></h2>
                <div class="combo"><svg><use href="#i-drill"/></svg><select aria-label="类型"><option>常规孔</option></select></div>
            </section>

            <section class="card">
                <h2>位置<svg><use href="#i-up"/></svg></h2>
                <div class="pick">
                    <div class="pick-bar"><svg><use href="#i-check"/></svg>指定点 (4)</div>
                    <button type="button" class="pick-btn" aria-label="绘制截面"><svg><use href="#i-sketch"/></svg></button>
                    <button type="button" class="pick-btn pick-points" aria-label="点"><svg><use href="#i-pluses"/></svg></button>
                </div>
            </section>

            <section class="card">
                <h2>方向<svg><use href="#i-up"/></svg></h2>
                <div class="field">
                    <label for="dir">孔方向</label>
                    <div class="combo"><svg><use href="#i-normal"/></svg><select id="dir"><option>垂直于面</option></select></div>
                </div>
            </section>

            <section class="card">
                <h2>形状和尺寸<svg><use href="#i-up"/></svg></h2>
                <div class="field">
                    <label for="shape">形状</label>
                    <div class="combo marked"><svg><use href="#i-csink"/></svg><select id="shape"><option>埋头孔</option></select><span class="mark mark-shape"></span></div>
                </div>
                <div class="sizes">
                    <h3>尺寸<svg><use href="#i-up"/></svg></h3>
                    <div class="size-list marked">
                        <div class="size">
                            <label for="cd">埋头直径</label>
                            <div class="value"><input id="cd" class="selected" value="8.4"><select aria-label="埋头直径单位"><option>mm</option></select></div>
                        </div>
                        <div class="size">
                            <label for="ca">埋头角度</label>
                            <div class="value"><input id="ca" value="90"><select aria-label="埋头角度单位"><option>deg</option></select></div>
                        </div>
                        <div class="size">
                            <label for="dia">直径</label>
                            <div class="value"><input id="dia" value="3.9"><select aria-label="直径单位"><option>mm</option></select></div>
                        </div>
                        <div class="size">
                            <label for="limit">深度限制</label>
                            <div class="value"><select id="limit"><option>值</option></select></div>
                        </div>
                        <div class="size">
                            <label for="depth">深度</label>
                            <div class="value"><input id="depth" value="3"><select aria-label="深度单位"><option>mm</option></select></div>
                        </div>
                        <div class="size">
                            <label for="tip">顶锥角</label>
                            <div class="value"><input id="tip" value="120"><select aria-label="顶锥角单位"><option>deg</option></select></div>
                        </div>
                        <span class="mark mark-sizes"></span>
                    </div>
                </div>
            </section>

            <section class="card">
                <h2>布尔<svg><use href="#i-up"/></svg></h2>
                <div class="field">
                    <label for="bool">布尔</label>
                    <div class="combo"><svg><use href="#i-subtract"/></svg><select id="bool"><option>求差</option></select></div>
                </div>
                <div class="body-pick">
                    <svg><use href="#i-check"/></svg><span>选择体 (1)</span>
                    <button type="button" class="body-btn" aria-label="选择体"><svg><use href="#i-body"/></svg></button>
                </div>
            </section>

            <div class="actions">
                <button type="submit" class="primary">&lt; 确定 &gt;</button>
                <button type="button">应用</button>
                <button type="button">取消</button>
            </div>
        </form>

        <div class="viewport">
            <svg viewBox="399 168 601 595" preserveAspectRatio="xMinYMin meet" role="img" aria-label="底板模型">
                <defs>
                    <symbol id="sink" viewBox="-20 -10 40 30">
                        <path d="M-17 0 -9 10V14Q0 18 8 14V10L17 0Z" fill="url(#gCone)"/>
                        <path d="M-9 8V13Q0 17 8 13V8Q0 13 -9 8Z" fill="#8a5a08"/>
                        <path d="M-8 11V13Q0 17 7 13V11Q0 15 -8 11Z" fill="#d9900f"/>
                        <ellipse rx="17" ry="7" fill="#ffbe0d" stroke="#6b4a10"/>
                        <path d="M-5 0H5M0 -5V5" stroke="#f08a4a"/>
                    </symbol>
                </defs>
                <!-- plate -->
                <path d="M419 487 892 343 969 379V388L496 532 419 496Z" fill="#dab975"/>
                <path d="M419 496 892 352 969 379 496 523 419 487Z" fill="#e2ca77"/>
                <path d="M892 343 969 379V388L892 352Z" fill="#d4b470"/>
                <path d="M419 487 496 523V532L419 496Z" fill="#dab975"/>
                <path d="M419 487 892 343 969 379 496 523ZM419 487V496L496 532 969 388V379M496 523V532" fill="none" stroke="#5d5038"/>
                <path d="M522 465 892 352 969 388M892 343V352" fill="none" stroke="#796636"/>
                <!-- datum frame -->
                <path d="M419 497 508 469M468 474V482L507 500M455 500 486 514 507 506" fill="none" stroke="#dcdad5"/>
                <path d="M503 467 514 467 504 473Z" fill="#e8e8e8" stroke="#aaa"/>
                <text x="516" y="471" class="axis" fill="#dcdcd6">Y</text>
                <use href="#sink" x="444" y="479" width="40" height="30"/>
                <use href="#sink" x="480" y="496" width="40" height="30"/>
                <use href="#sink" x="867" y="350" width="40" height="30"/>
                <use href="#sink" x="903" y="367" width="40" height="30"/>
                <path d="M419 496V385M419 439 468 423V474M419 439 458 457V515M419 496 490 530" fill="none" stroke="#3a36ee"/>
                <path d="M419 382 422 395H416Z" fill="#0b08b8"/>
                <path d="M497 533 485 531 488 526Z" fill="#0b08b8"/>
                <path d="M412 484 437 477M464 474 480 481M500 510 512 518 478 512M864 351 885 359M890 359 908 351M935 373 956 383" fill="none" stroke="#2b2b22"/>
                <path d="M428 474 460 487M470 487 498 479M480 513 496 508M872 364 884 358M927 376 948 369M926 378 935 383" fill="none" stroke="#1d6467"/>
                <text x="415" y="380" class="axis" fill="#2521e6">Z</text>
                <text x="498" y="540" class="axis" fill="#2521e6">X</text>
                <g fill="none" stroke="#2320dd" stroke-width="2">
                    <path d="M426 472 429 474 432 473 435 476"/><path d="M478 477 481 478 484 476 488 477"/><path d="M474 508 477 510 480 508 483 511"/><path d="M504 512 507 514 510 511 514 512"/>
                    <path d="M876 355 880 353 884 354"/><path d="M886 351 890 352 895 354"/><path d="M931 367 935 370 939 370"/><path d="M946 378 950 375 956 375"/>
                </g>
                <!-- watermark -->
                <g class="watermark">
                    <text x="766" y="711" class="wm-bai">Bai</text>
                    <ellipse cx="835" cy="678" rx="6" ry="8"/>
                    <ellipse cx="848" cy="665" rx="6" ry="9"/>
                    <ellipse cx="864" cy="667" rx="6" ry="9" transform="rotate(12 864 667)"/>
                    <ellipse cx="874" cy="682" rx="6" ry="8"/>
                    <path d="M855 680C864 680 866 688 872 693C880 700 877 712 866 712H844C832 712 830 700 837 694C843 689 846 680 855 680Z"/>
                    <text x="839" y="707" class="wm-du">du</text>
                    <text x="882" y="709" class="wm-cn">经验</text>
                    <text x="767" y="735" class="wm-url">jingyan.baidu.com</text>
                </g>
            </svg>
        </div>
    </main>
</body>
</html>
```
FILE: styles.css
```css
* {
    box-sizing: border-box;
}
body {
    margin: 0;
    height: 100vh;
    display: flex;
    flex-direction: column;
    overflow: hidden;
    background: #fff;
    color: #222;
    font-family: "Noto Sans", "Noto Sans CJK SC", sans-serif;
    font-size: 10px;
    line-height: 14px;
}
button, select, input {
    font: inherit;
    color: inherit;
    margin: 0;
    padding: 0;
    border: 0;
    background: none;
}
svg {
    display: block;
    flex: none;
}
.sprites {
    position: absolute;
    width: 0;
    height: 0;
}
h1, h2, h3 {
    margin: 0;
    font-weight: normal;
}

/* shared bits */
.caret {
    flex: none;
    width: 0;
    height: 0;
    border: 3px solid transparent;
    border-top-color: #222;
    border-bottom: 0;
}
.sep {
    flex: none;
    width: 1px;
    height: 16px;
    background: #ddd;
}
.tool {
    flex: none;
    width: 20px;
    height: 20px;
    display: grid;
    place-items: center;
}
.tool svg {
    width: 18px;
    height: 18px;
}
.tiny {
    font-size: 6px;
    fill: #333;
}
.tiny-bold {
    font-weight: bold;
}
.tinier {
    font-size: 5px;
}
.red {
    fill: #b83434;
}
.marked {
    position: relative;
}
.mark {
    position: absolute;
    border: 4px solid #ed1c24;
    pointer-events: none;
}
.mark-hole {
    left: -8px;
    top: -14px;
    width: 51px;
    height: 75px;
}
.mark-shape {
    left: -12px;
    top: -12px;
    width: 71px;
    height: 45px;
}
.mark-sizes {
    left: 126px;
    top: -14px;
    width: 44px;
    height: 168px;
}

/* title bar */
.titlebar {
    flex: none;
    display: grid;
    grid-template-columns: 538px 1fr;
    align-items: center;
    height: 24px;
}
.quick {
    display: flex;
    align-items: center;
    gap: 4px;
}
.quick .tool:first-child {
    margin-left: -4px;
}
.window-btn {
    display: flex;
    align-items: center;
    gap: 2px;
}
.window-btn svg {
    width: 17px;
    height: 17px;
}
.window-btn .caret {
    margin-left: 2px;
}
.caret-bar {
    padding-top: 2px;
    border-top: 1px solid #444;
}
.caret-bar .caret {
    display: block;
}
.title {
    font-size: 12px;
    white-space: nowrap;
}

/* menu tabs */
.tabs {
    flex: none;
    display: flex;
    align-items: center;
    gap: 25px;
    height: 26px;
    padding-left: 8px;
    background: #c7d7d5;
    font-size: 12px;
}
.tabs a {
    color: #2b3636;
    text-decoration: none;
}

/* ribbon */
.ribbon {
    flex: none;
    display: flex;
    height: 88px;
    padding-top: 4px;
    border-bottom: 1px solid #ddd;
}
.group {
    flex: none;
    display: flex;
    flex-direction: column;
    justify-content: space-between;
    height: 82px;
    border-right: 1px solid #ddd;
}
.group-feature { width: 333px; }
.group-sync { width: 161px; }
.group-surface { width: 40px; }
.group-std { width: 98px; }
.group-gear { width: 48px; }
.group-spring { width: 55px; }
.group-mach { width: 48px; }
.group-model { width: 92px; }
.group-p { width: 27px; }
.group-dim {
    flex: 1 0 98px;
    overflow: hidden;
    border-right: 0;
}
.group-dim .group-label {
    padding: 0;
    justify-content: flex-end;
}
.group-dim .group-label span {
    flex: none;
    margin-right: -4px;
}
.group-body {
    display: flex;
}
.group-sync .group-body {
    padding-left: 6px;
}
.big {
    flex: none;
    width: 42px;
    display: flex;
    flex-direction: column;
    align-items: center;
    white-space: nowrap;
}
.big-narrow {
    width: 34px;
}
.big > svg {
    width: 28px;
    height: 30px;
    margin-bottom: 6px;
}
.big .caret {
    margin-top: 4px;
}
.group-surface .big {
    width: 39px;
}
.big-more {
    margin-left: auto;
}
.frame {
    display: grid;
    place-items: center;
    width: 34px;
    height: 32px;
    margin-bottom: 4px;
    border: 1px solid #e8e8e8;
    border-radius: 3px;
}
.frame svg {
    width: 18px;
    height: 18px;
}
.stack {
    display: flex;
    flex-direction: column;
    margin: -2px 3px 0;
}
.stack-first {
    margin-left: 7px;
}
.stack button {
    display: flex;
    align-items: center;
    gap: 3px;
    height: 21px;
    white-space: nowrap;
}
.stack svg {
    width: 16px;
    height: 16px;
}
.stack .caret {
    margin-left: 6px;
}
.rows {
    display: flex;
    flex-direction: column;
    gap: 8px;
    padding: 6px 0 0 4px;
}
.row {
    display: flex;
    align-items: center;
    gap: 2px;
}
.group-label {
    display: flex;
    align-items: center;
    height: 14px;
    padding-right: 7px;
    color: #2f86ad;
    white-space: nowrap;
}
.group-label span {
    flex: 1;
    text-align: center;
}
.group-feature .group-label span {
    padding-right: 14px;
}
.group-p .group-label span {
    text-align: left;
}

/* selection bar */
.selbar {
    flex: none;
    display: flex;
    align-items: center;
    gap: 3px;
    height: 30px;
    border-bottom: 1px solid #a9adad;
}
.snaps {
    display: flex;
    align-items: center;
    gap: 2px;
    margin-left: 3px;
}
.snaps .tool {
    width: 21px;
}
.snaps .caret {
    margin: 0 1px;
}
.tool.on {
    background: #c9d8d6;
    border: 1px solid #b5c7c4;
}
.selbar .sep {
    height: 22px;
    margin: 0 7px;
}

/* drop-downs */
.combo {
    display: flex;
    align-items: center;
    height: 24px;
    padding: 0 4px 0 3px;
    border: 1px solid #b4b4b4;
    background: #fff;
}
.combo::after, .value::after {
    content: "";
    border: 4px solid transparent;
    border-top-color: #222;
    border-bottom: 0;
}
.combo select {
    flex: 1;
    min-width: 0;
    appearance: none;
    outline: 0;
}
.combo svg {
    width: 16px;
    height: 16px;
    margin-right: 3px;
}
.combo-sm {
    flex: none;
    height: 19px;
    padding-left: 2px;
}
.combo-first {
    width: 39px;
    margin-left: -1px;
    margin-right: 5px;
}
.combo-scope {
    width: 131px;
    margin-right: 3px;
}
.combo-point {
    width: 131px;
    margin-left: 6px;
}

/* workspace */
.workspace {
    flex: 1;
    min-height: 0;
    display: grid;
    grid-template-columns: 92px 307px 1fr;
}
.navigator {
    overflow: hidden;
    background: #fff;
}
.nav-top {
    display: flex;
    justify-content: flex-end;
    height: 27px;
    padding: 9px 15px 0 0;
}
.restore {
    width: 12px;
    height: 11px;
    border: 1px solid #333;
    border-top-width: 2px;
}
.navigator table {
    width: 82px;
    border-collapse: collapse;
    table-layout: fixed;
}
.navigator th, .navigator td {
    height: 19px;
    padding: 0;
    overflow: hidden;
    border: 1px solid #e9e9e9;
    border-left: 0;
    text-align: left;
    font-weight: bold;
    line-height: 12px;
    white-space: nowrap;
}
.navigator th {
    height: 21px;
    background: #eee;
    border-color: #d6d6d6;
    font-weight: normal;
}
.navigator tr > :first-child {
    width: 46px;
}
.navigator tr > :last-child {
    padding-left: 5px;
}
.navigator tbody tr:nth-child(3n) td {
    height: 18px;
}
.navigator tbody tr:nth-child(even) {
    background: #f9f9f9;
}
.navigator td svg {
    width: 12px;
    height: 12px;
}
.dot {
    display: block;
    width: 1px;
    height: 3px;
    background: #4cc8e8;
}

/* hole dialog */
.dialog {
    display: flex;
    flex-direction: column;
    gap: 3px;
    overflow: hidden;
    border-left: 2px solid #8b9d9b;
    border-right: 2px solid #d2d4d4;
    background: #e6e6e6;
    font-size: 11px;
}
.dialog-head {
    flex: none;
    display: flex;
    align-items: center;
    gap: 6px;
    height: 23px;
    margin: 0 -2px;
    padding: 0 7px 0 8px;
    background: #5f8a83;
    color: #fff;
}
.dialog-head svg {
    width: 13px;
    height: 13px;
}
.dialog-head h1 {
    flex: 1;
    padding-left: 3px;
    font-size: 12px;
}
.card {
    flex: none;
    margin: 0 3px 0 4px;
    padding: 0 9px 7px;
    background: #fff;
    border-bottom: 2px solid #cfcfcf;
}
.card h2, .sizes h3 {
    display: flex;
    align-items: center;
    justify-content: space-between;
    color: #2f86ad;
}
.card h2 {
    height: 24px;
    margin: 0 -4px 4px -2px;
    font-size: 13px;
}
.card h2 svg, .sizes h3 svg {
    width: 12px;
    height: 12px;
}
.pick {
    display: flex;
    align-items: center;
    gap: 2px;
    height: 29px;
}
.pick-bar {
    flex: 1;
    align-self: stretch;
    display: flex;
    align-items: center;
    gap: 5px;
    padding-left: 1px;
    background: #fcd670;
}
.pick-bar svg, .body-pick > svg {
    width: 12px;
    height: 12px;
}
.pick-btn {
    width: 22px;
    height: 22px;
    display: grid;
    place-items: center;
    border: 1px solid #b4b4b4;
}
.pick-btn svg {
    width: 16px;
    height: 16px;
}
.pick-points {
    width: 30px;
    height: 29px;
    background: #faeab0;
    border-color: #fcd670;
}
.pick-points svg {
    width: 22px;
    height: 22px;
}
.field {
    display: grid;
    grid-template-columns: 1fr 132px;
    align-items: center;
}
.sizes {
    margin-top: 2px;
    padding: 0 7px 8px;
    border: 1px solid #d9e0e0;
    background: #f0f5f6;
}
.sizes h3 {
    height: 21px;
    margin: 0 -3px 6px -1px;
    font-size: 12px;
}
.size-list {
    display: grid;
    gap: 2px;
}
.size {
    display: grid;
    grid-template-columns: 1fr 132px;
    align-items: center;
}
.value {
    display: flex;
    align-items: center;
    height: 23px;
    padding: 0 3px 0 4px;
    border: 1px solid #b4b4b4;
    background: #fff;
}
.value input {
    width: 75px;
    outline: 0;
}
.value input.selected {
    width: 17px;
    height: 16px;
    margin-right: 58px;
    background: #3a96f6;
    color: #fff;
}
.value select {
    flex: 1;
    min-width: 0;
    appearance: none;
    outline: 0;
}
.body-pick {
    display: flex;
    align-items: center;
    gap: 5px;
    padding-left: 1px;
    margin-top: 2px;
}
.body-pick span {
    flex: 1;
}
.body-btn {
    display: grid;
    place-items: center;
    width: 30px;
    height: 30px;
    border: 1px solid #c4c4c4;
}
.body-btn svg {
    width: 22px;
    height: 22px;
}
.actions {
    display: flex;
    justify-content: flex-end;
    gap: 5px;
    padding: 7px 12px 0 0;
}
.actions button {
    width: 50px;
    height: 25px;
    background: #c9c9cd;
    border: 1px solid #b0b0b4;
}
.actions .primary {
    background: #9ccde6;
    border-color: #58a3c8;
}

/* graphics window */
.viewport {
    overflow: hidden;
    background: linear-gradient(#b3b4b6, #c8c9cb 36%, #eaebed);
}
.viewport > svg {
    width: 100%;
    height: 100%;
}
.axis {
    font-size: 11px;
}
.watermark {
    fill: #f5f6f7;
    stroke: #cfd0d2;
    stroke-width: 2px;
    paint-order: stroke;
}
.wm-bai {
    font: bold 40px "Liberation Sans", sans-serif;
}
.wm-du {
    font: bold 26px "Liberation Sans", sans-serif;
    fill: #d3d4d6;
    stroke: none;
}
.wm-cn {
    font: bold 31px "Noto Sans CJK SC", sans-serif;
}
.wm-url {
    font: 21px "Noto Sans", sans-serif;
}
```
